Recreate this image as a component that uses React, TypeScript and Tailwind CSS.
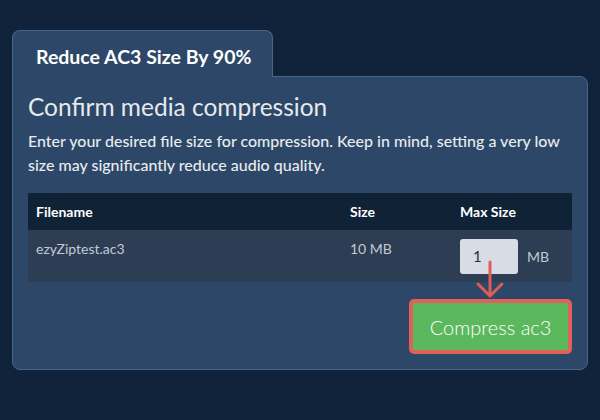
const font = { fontFamily: "Lato, 'Noto Sans', sans-serif" };

function DownArrow() {
  return (
    <svg
      className="absolute left-[15px] top-[21px] pointer-events-none"
      width="30"
      height="40"
      viewBox="0 0 30 40"
      fill="none"
      stroke="#e05c57"
      strokeWidth="3"
      strokeLinecap="round"
      strokeLinejoin="round"
    >
      <path d="M15 2 V35" />
      <path d="M3 24 L15 36 L27 24" />
    </svg>
  );
}

export default function App() {
  return (
    <div className="min-h-[420px] bg-[#10233a] pt-[30px] pl-[12px]" style={font}>
      {/* tab */}
      <div className="relative z-10 -mb-px h-[47px] w-[261px] rounded-t-[8px] border border-b-0 border-[#4a6687] bg-[#2c4767] pl-[23px] pt-[12px]">
        <span className="block text-[19.5px] font-bold leading-[28px] text-white">
          Reduce AC3 Size By 90%
        </span>
      </div>

      {/* panel */}
      <div className="w-[576px] rounded-[8px] rounded-tl-none border border-[#4a6687] bg-[#2c4767] px-[15px] pt-[14px] pb-[15px]">
        <h1 className="text-[24.5px] leading-[32px] font-normal text-[#e6e9ed]">
          Confirm media compression
        </h1>
        <p className="mt-[6px] text-[16px] leading-[24px] font-medium text-[#e8ebef]">
          Enter your desired file size for compression. Keep in mind, setting a very low size may
          significantly reduce audio quality.
        </p>

        <table className="mt-[16px] w-[544px] table-fixed border-collapse">
          <thead>
            <tr className="bg-[#0f2236]">
              <th className="w-[314px] px-[8px] py-[8px] text-left text-[14px] font-bold leading-[21px] text-white">
                Filename
              </th>
              <th className="w-[110px] px-[8px] py-[8px] text-left text-[14px] font-bold leading-[21px] text-white">
                Size
              </th>
              <th className="px-[8px] py-[8px] text-left text-[14px] font-bold leading-[21px] text-white">
                Max Size
              </th>
            </tr>
          </thead>
          <tbody>
            <tr className="bg-[#2d3d53] align-top">
              <td className="px-[8px] pt-[9px] pb-[8px] text-[14px] leading-[20px] text-[#c3cad3]">
                ezyZiptest.ac3
              </td>
              <td className="px-[8px] pt-[9px] pb-[8px] text-[14px] leading-[20px] text-[#c3cad3]">
                10 MB
              </td>
              <td className="px-[8px] pt-[9px] pb-[8px]">
                <div className="relative flex items-center gap-[9px]">
                  <div className="flex h-[35px] w-[58px] items-center rounded-[3px] bg-[#d8dde5] pl-[13px] text-[15px] text-[#2a2f36]">
                    1
                  </div>
                  <span className="text-[14px] text-[#c3cad3]">MB</span>
                  <DownArrow />
                </div>
              </td>
            </tr>
          </tbody>
        </table>

        <div className="mt-[17px] flex justify-end">
          <button className="h-[55px] w-[163px] rounded-[5px] border-4 border-[#e0605a] bg-[#5cb85c] text-[20px] font-light text-white">
            Compress ac3
          </button>
        </div>
      </div>
    </div>
  );
}
